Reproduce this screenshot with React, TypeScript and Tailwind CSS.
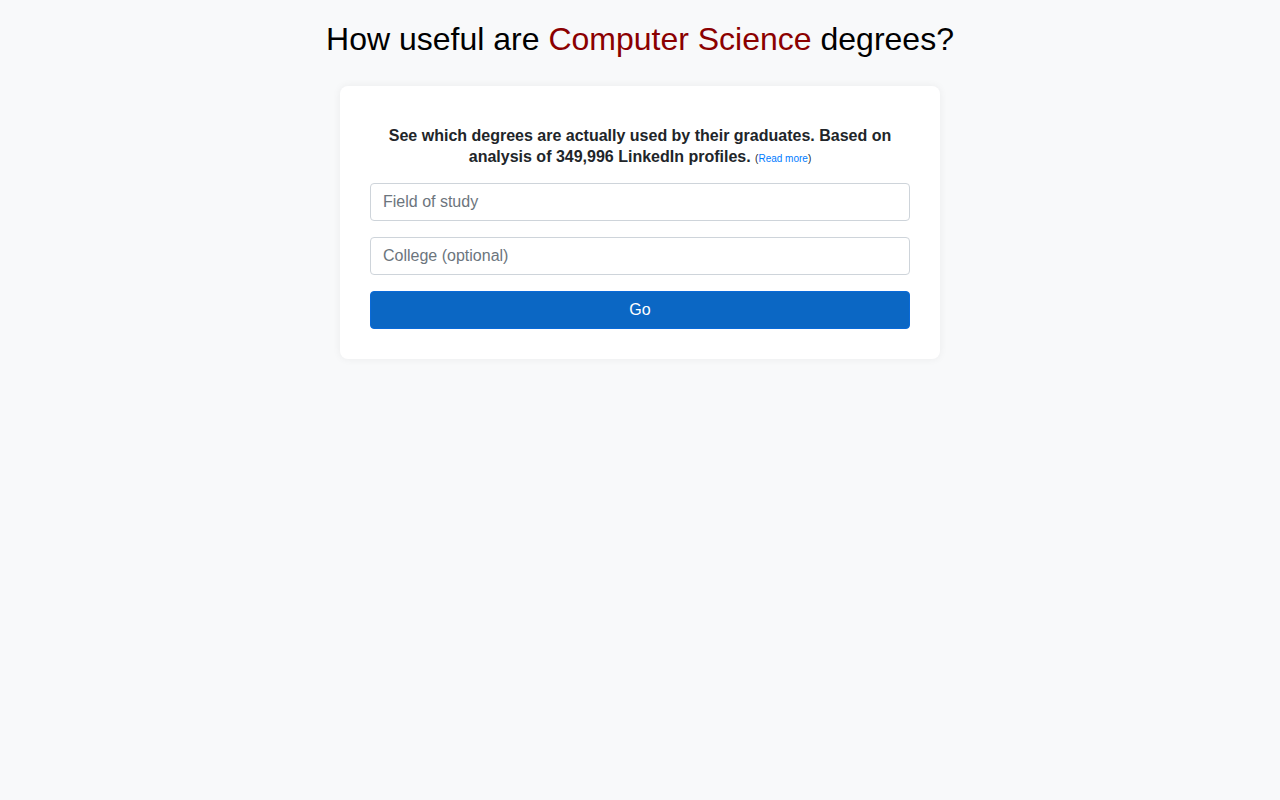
export default function App() {
  return (
    <div className="min-h-screen bg-[#f8f9fa] font-['Liberation_Sans',Arial,sans-serif] text-[#212529]">
      <h1 className="pt-5 text-center text-[32px] leading-[1.2] font-normal text-black">
        How useful are <span className="text-[#8b0000]">Computer Science</span> degrees?
      </h1>
      <div className="mx-auto mt-7 w-[600px] rounded-lg bg-white px-[30px] pt-[39px] pb-[30px] shadow-[0_0_8px_rgba(0,0,0,0.06)]">
        <p className="mb-4 text-center text-base leading-[21px] font-bold">
          See which degrees are actually used by their graduates. Based on analysis of 349,996 LinkedIn profiles.{" "}
          <span className="text-[10px] leading-none font-normal">
            (<a href="#" className="text-[#007bff]">Read more</a>)
          </span>
        </p>
        <div className="flex flex-col gap-4">
          <input
            placeholder="Field of study"
            className="h-[38px] w-full rounded border border-[#ced4da] bg-white px-3 text-base text-[#495057] placeholder:text-[#6c757d] focus:outline-none"
          />
          <input
            placeholder="College (optional)"
            className="h-[38px] w-full rounded border border-[#ced4da] bg-white px-3 text-base text-[#495057] placeholder:text-[#6c757d] focus:outline-none"
          />
          <button className="h-[38px] w-full rounded border border-[#0a6ad9] bg-[#0b67c4] text-base text-white">
            Go
          </button>
        </div>
      </div>
    </div>
  );
}
